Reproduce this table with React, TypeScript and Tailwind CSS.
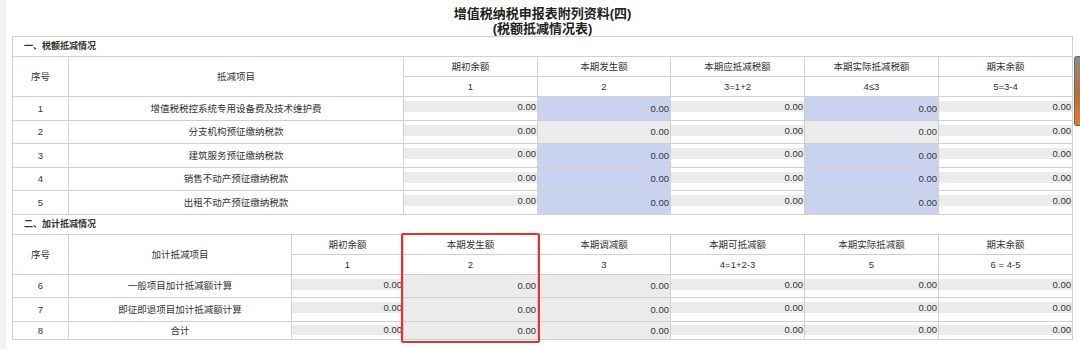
import React from "react";

type Kind = "bar" | "blue" | "gray";

const FONT = "font-['Liberation_Sans','Noto_Sans_CJK_SC',sans-serif]";

function Head({ children, className = "" }: { children?: React.ReactNode; className?: string }) {
  return (
    <div className={`bg-white flex items-center justify-center text-[9.5px] text-[#333] leading-none ${className}`}>
      {children}
    </div>
  );
}

function Val({ kind, small = false }: { kind: Kind; small?: boolean }) {
  if (kind === "bar") {
    return (
      <div className={`bg-white ${small ? "pt-[3px]" : "pt-[4px]"}`}>
        <div
          className={`${small ? "h-[10px] leading-[10px]" : "h-[11px] leading-[11px]"} bg-[#ebebeb] text-right pr-px text-[9.5px] text-[#333]`}
        >
          0.00
        </div>
      </div>
    );
  }
  return (
    <div
      className={`${kind === "blue" ? "bg-[#c9d3ef]" : "bg-[#ebebeb]"} flex items-center justify-end pr-px text-[9.5px] text-[#333] leading-none`}
    >
      0.00
    </div>
  );
}

const s1Rows: { no: string; name: string; kinds: Kind[] }[] = [
  { no: "1", name: "增值税税控系统专用设备费及技术维护费", kinds: ["bar", "blue", "bar", "blue", "bar"] },
  { no: "2", name: "分支机构预征缴纳税款", kinds: ["bar", "gray", "bar", "gray", "bar"] },
  { no: "3", name: "建筑服务预征缴纳税款", kinds: ["bar", "blue", "bar", "blue", "bar"] },
  { no: "4", name: "销售不动产预征缴纳税款", kinds: ["bar", "blue", "bar", "blue", "bar"] },
  { no: "5", name: "出租不动产预征缴纳税款", kinds: ["bar", "blue", "bar", "blue", "bar"] },
];

const s2Rows: { no: string; name: string }[] = [
  { no: "6", name: "一般项目加计抵减额计算" },
  { no: "7", name: "即征即退项目加计抵减额计算" },
  { no: "8", name: "合计" },
];

const s2Kinds: Kind[] = ["bar", "gray", "gray", "bar", "bar", "bar"];

export default function App() {
  return (
    <div className={`relative w-[1080px] h-[349px] bg-white overflow-hidden flex ${FONT}`}>
      <div className="w-[6px] h-full bg-[#f2f2f2] shrink-0" />
      <div className="flex flex-col pl-[6px]">
        <div className="pt-[6px] h-[36px] w-[1061px] flex flex-col items-center text-[13px] font-bold leading-[15px] text-[#222]">
          <div>增值税纳税申报表附列资料(四)</div>
          <div>(税额抵减情况表)</div>
        </div>

        <div className="w-[1061px] border border-[#d0d0d0] bg-[#d0d0d0] flex flex-col gap-px">
          {/* Section 1 */}
          <div className="grid gap-px grid-cols-[55px_334px_133px_132px_133px_133px_133px] grid-rows-[19px_19px_19px_23px_22px_23px_22px_23px]">
            <div className="col-span-full bg-white flex items-center pl-[11px] text-[9px] font-bold text-[#333]">
              一、税额抵减情况
            </div>
            <Head className="row-span-2">序号</Head>
            <Head className="row-span-2">抵减项目</Head>
            <Head>期初余额</Head>
            <Head>本期发生额</Head>
            <Head>本期应抵减税额</Head>
            <Head>本期实际抵减税额</Head>
            <Head>期末余额</Head>
            <Head>1</Head>
            <Head>2</Head>
            <Head>3=1+2</Head>
            <Head>4≤3</Head>
            <Head>5=3-4</Head>
            {s1Rows.map((r) => (
              <React.Fragment key={r.no}>
                <Head>{r.no}</Head>
                <Head>{r.name}</Head>
                {r.kinds.map((k, i) => (
                  <Val key={i} kind={k} />
                ))}
              </React.Fragment>
            ))}
          </div>

          {/* Section 2 */}
          <div className="grid gap-px grid-cols-[55px_222px_111px_133px_132px_133px_133px_133px] grid-rows-[19px_19px_19px_22px_23px_17px]">
            <div className="col-span-full bg-white flex items-center pl-[11px] text-[9px] font-bold text-[#333]">
              二、加计抵减情况
            </div>
            <Head className="row-span-2">序号</Head>
            <Head className="row-span-2">加计抵减项目</Head>
            <Head>期初余额</Head>
            <Head>本期发生额</Head>
            <Head>本期调减额</Head>
            <Head>本期可抵减额</Head>
            <Head>本期实际抵减额</Head>
            <Head>期末余额</Head>
            <Head>1</Head>
            <Head>2</Head>
            <Head>3</Head>
            <Head>4=1+2-3</Head>
            <Head>5</Head>
            <Head>6 = 4-5</Head>
            {s2Rows.map((r, ri) => (
              <React.Fragment key={r.no}>
                <Head>{r.no}</Head>
                <Head>{r.name}</Head>
                {s2Kinds.map((k, i) => (
                  <Val key={i} kind={k} small={ri === 2} />
                ))}
              </React.Fragment>
            ))}
          </div>
        </div>
      </div>

      {/* red highlight box */}
      <div className="absolute left-[401px] top-[233px] w-[139px] h-[110px] border-2 border-[#e8312a] rounded-[2px] pointer-events-none" />

      {/* right edge scroll widget */}
      <div className="absolute left-[1074px] top-[56px] w-[6px] h-[70px] rounded-l-[3px] border border-r-0 border-[#6a6a6a] bg-linear-to-b from-[#8c8c8c] via-[#b0703a] to-[#e67a28]" />
    </div>
  );
}
